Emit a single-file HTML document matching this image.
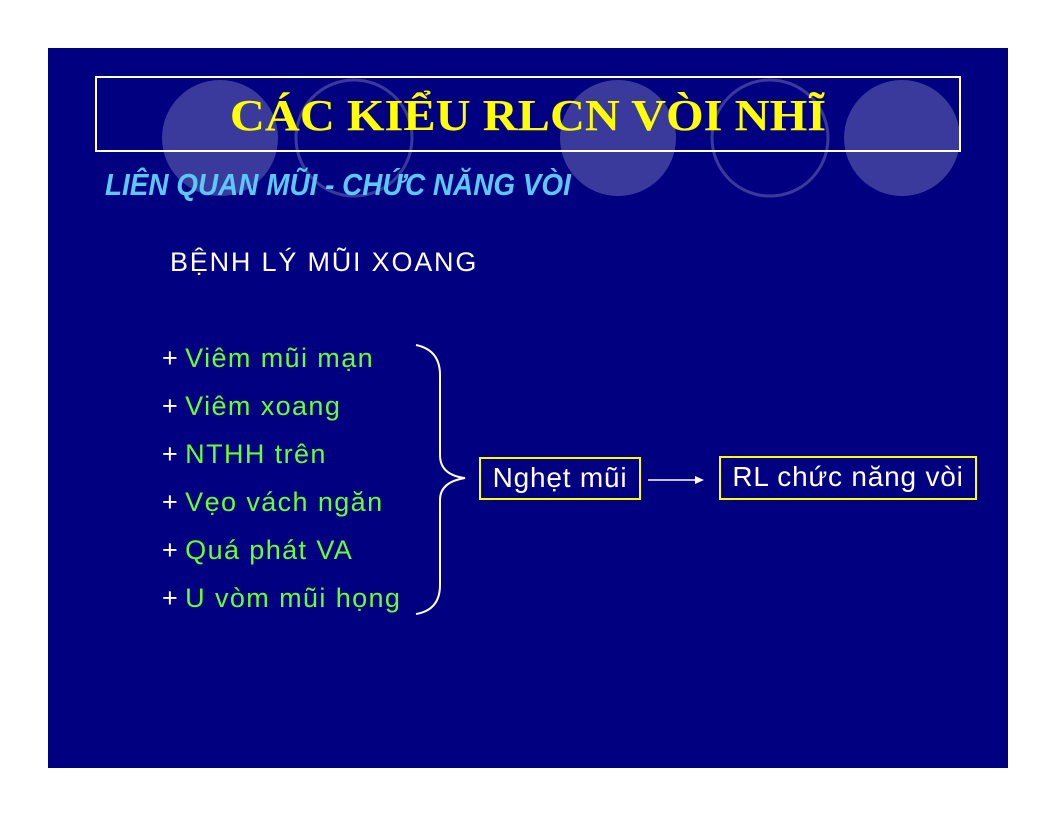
<!DOCTYPE html>
<html><head><meta charset="utf-8"><style>
body{margin:0;width:1056px;height:816px;background:#fff;position:relative;overflow:hidden;font-family:"Liberation Sans",sans-serif}
#s{position:absolute;left:48px;top:48px;width:960px;height:720px;background:#000080}
.t{position:absolute;white-space:nowrap}
.li{position:absolute;left:162px;font-size:27px;color:#66ff33;white-space:nowrap;letter-spacing:1.4px}
.li b{color:#fff;font-weight:normal;margin-right:6px}
.bx{position:absolute;border:2px solid #ffff00;color:#fff;font-size:28px;box-sizing:border-box;text-align:center;line-height:38px;letter-spacing:0.8px}
</style></head><body>
<div id="s"></div>
<svg style="position:absolute;left:0;top:0" width="1056" height="816">
<g fill="#3a3a9c">
<circle cx="220" cy="138" r="58"/><circle cx="618" cy="138" r="58"/><circle cx="902" cy="138" r="58"/>
</g>
<g fill="none" stroke="#3a3a9c" stroke-width="3">
<circle cx="354" cy="138" r="58"/><circle cx="770" cy="138" r="58"/>
</g>
<rect x="96" y="77" width="864" height="74" fill="none" stroke="#fff" stroke-width="2"/>
<path d="M416 345 Q440 350 440 375 L440 455 Q440 475 465 478 Q440 482 440 500 L440 585 Q440 610 416 614" fill="none" stroke="#fff" stroke-width="2"/>
<line x1="648" y1="480" x2="698" y2="480" stroke="#fff" stroke-width="1.5"/>
<path d="M704 480 L695 476 L695 484 Z" fill="#fff"/>
</svg>
<div class="t" style="left:96px;top:90px;width:864px;text-align:center;font-family:'Liberation Serif',serif;font-weight:bold;font-size:44px;color:#ffff00;transform:scaleX(1.1);">CÁC KIỂU RLCN VÒI NHĨ</div>
<div class="t" style="left:105px;top:167px;font-weight:bold;font-style:italic;font-size:31px;color:#5cc8f8;transform:scaleX(0.9);transform-origin:left;">LIÊN QUAN MŨI - CHỨC NĂNG VÒI</div>
<div class="t" style="left:170px;top:247px;font-size:27px;color:#fff;letter-spacing:1.8px">BỆNH LÝ MŨI XOANG</div>
<div class="li" style="top:343px"><b>+</b>Viêm mũi mạn</div>
<div class="li" style="top:391px"><b>+</b>Viêm xoang</div>
<div class="li" style="top:439px"><b>+</b>NTHH trên</div>
<div class="li" style="top:487px"><b>+</b>Vẹo vách ngăn</div>
<div class="li" style="top:535px"><b>+</b>Quá phát VA</div>
<div class="li" style="top:583px"><b>+</b>U vòm mũi họng</div>
<div class="bx" style="left:479px;top:457px;width:162px;height:43px">Nghẹt mũi</div>
<div class="bx" style="left:719px;top:456px;width:258px;height:44px">RL chức năng vòi</div>
</body></html>
